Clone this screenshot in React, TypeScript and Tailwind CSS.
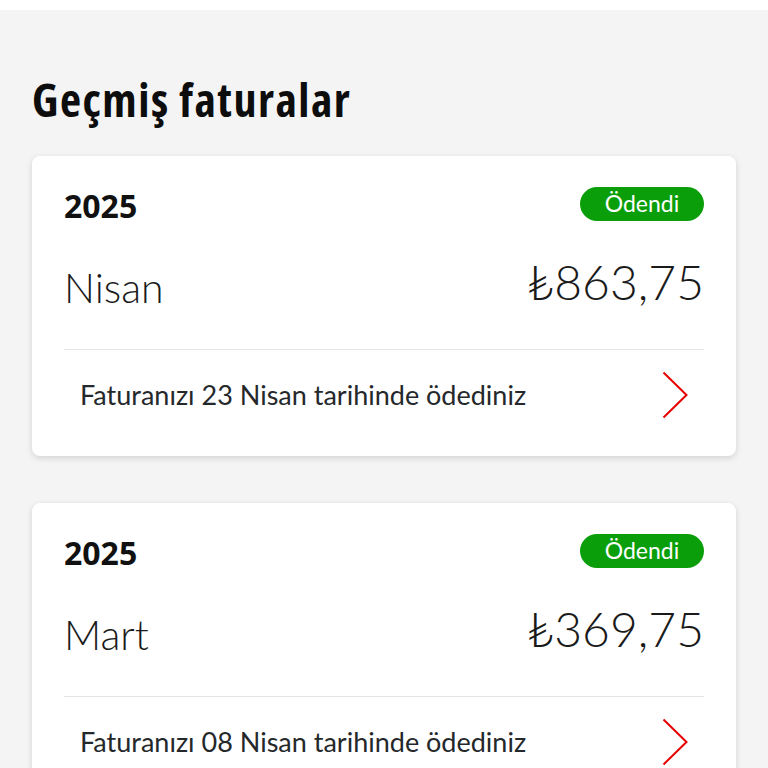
const bills = [
  { year: "2025", month: "Nisan", amount: "₺863,75", paidOn: "23 Nisan" },
  { year: "2025", month: "Mart", amount: "₺369,75", paidOn: "08 Nisan" },
];

const Chevron = () => (
  <svg width="26" height="48" viewBox="0 0 26 48" fill="none" className="mr-4 shrink-0">
    <polyline points="1.5,1.5 24.5,24 1.5,46.5" stroke="#e60000" strokeWidth="2" />
  </svg>
);

const BillCard = ({ year, month, amount, paidOn }: (typeof bills)[number]) => (
  <div className="rounded-lg bg-white px-8 pt-[31px] pb-[16px] shadow-[0_2px_6px_rgba(0,0,0,0.14)]">
    <div className="flex h-[33px] items-center justify-between">
      <span className="mt-[5px] font-['Noto_Sans',sans-serif] text-[32px] font-bold leading-none text-[#111]">
        {year}
      </span>
      <span className="flex h-[34px] w-[124px] items-center justify-center rounded-full bg-[#0a9e0a] font-['Lato','Noto_Sans',sans-serif] text-[23px] leading-none text-white">
        Ödendi
      </span>
    </div>
    <div className="mt-[39px] flex items-baseline justify-between font-['Lato','Noto_Sans',sans-serif] font-light text-[#1a1a1a]">
      <span className="text-[41px] leading-[52px]">{month}</span>
      <span className="relative -top-[3px] text-[48px] leading-[52px]">{amount}</span>
    </div>
    <div className="mt-[35px] h-px bg-[#e4e4e4]" />
    <div className="flex h-[90px] items-center justify-between">
      <span className="pl-4 font-['Lato','Noto_Sans',sans-serif] text-[27px] text-[#25282b]">
        Faturanızı {paidOn} tarihinde ödediniz
      </span>
      <Chevron />
    </div>
  </div>
);

export default function App() {
  return (
    <div className="min-h-screen bg-[#f4f4f4]">
      <div className="h-[10px] bg-white" />
      <div className="px-8 pb-10">
        <h1 className="mt-[66px] font-['Open_Sans','Noto_Sans',sans-serif] text-[46px] font-bold font-stretch-condensed leading-[46px] tracking-[1.5px] text-[#0d0d0d]">
          Geçmiş faturalar
        </h1>
        <div className="mt-[34px] flex flex-col gap-[47px]">
          {bills.map((b) => (
            <BillCard key={b.month} {...b} />
          ))}
        </div>
      </div>
    </div>
  );
}
